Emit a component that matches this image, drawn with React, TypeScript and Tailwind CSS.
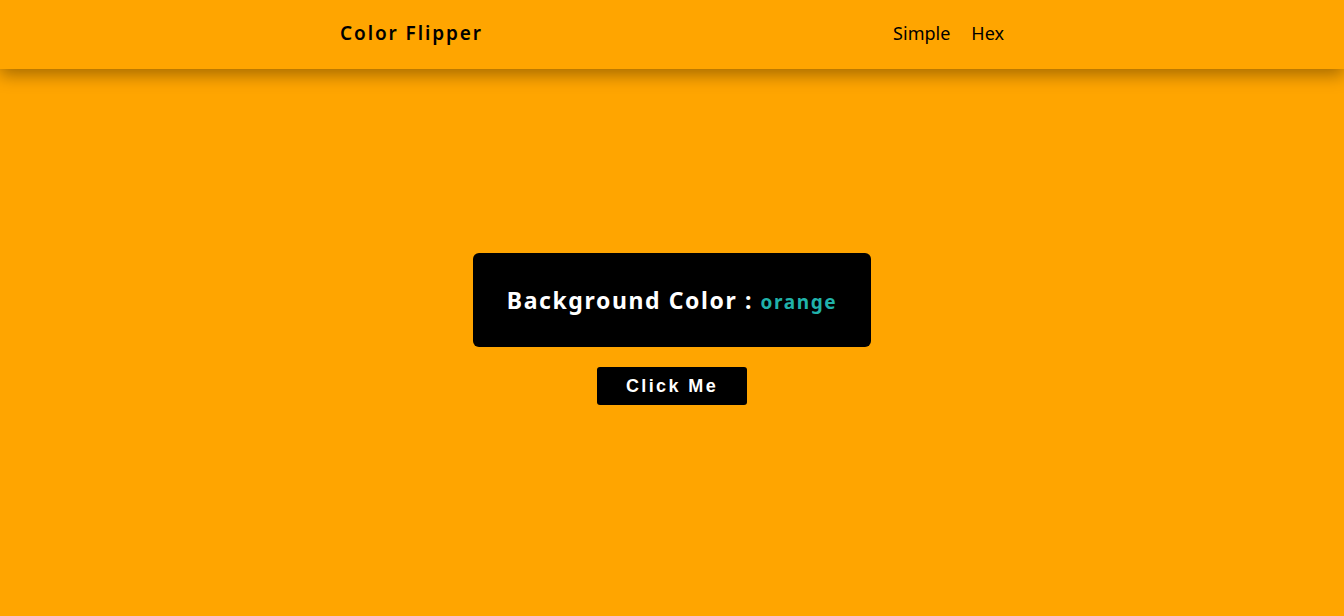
import React, { useState } from 'react';

const COLORS = ['orange', 'red', 'green', 'blue', 'purple', 'teal'];

export default function App() {
  const [color, setColor] = useState('orange');

  const flip = () => {
    const next = COLORS[Math.floor(Math.random() * COLORS.length)];
    setColor(next);
  };

  return (
    <div className="min-h-screen bg-[#ffa500] font-['Noto_Sans',sans-serif]">
      {/* Nav */}
      <nav className="h-[69px] bg-[#ffa500] shadow-[0_6px_16px_rgba(0,0,0,0.35)] relative">
        <div className="w-[664px] mx-auto h-full flex items-center justify-between pb-[2px]">
          <h4 className="text-[19px] font-semibold tracking-[1.9px] text-black">Color Flipper</h4>
          <ul className="flex items-center gap-[21px] text-[18px] text-black">
            <li><a href="#">Simple</a></li>
            <li><a href="#">Hex</a></li>
          </ul>
        </div>
      </nav>

      {/* Main */}
      <main className="flex flex-col items-center pt-[184px]">
        <div className="w-[398px] h-[94px] bg-black rounded-[6px] flex items-center justify-center">
          <h2 className="text-white text-[23px] font-bold tracking-[1.6px]">
            Background Color : <span className="text-[#20b2aa] text-[19px]">{color}</span>
          </h2>
        </div>
        <button
          onClick={flip}
          className="mt-[20px] w-[150px] h-[38px] bg-black rounded-[3px] text-white text-[18px] font-bold tracking-[2.4px] font-['Liberation_Sans',sans-serif]"
        >
          Click Me
        </button>
      </main>
    </div>
  );
}
